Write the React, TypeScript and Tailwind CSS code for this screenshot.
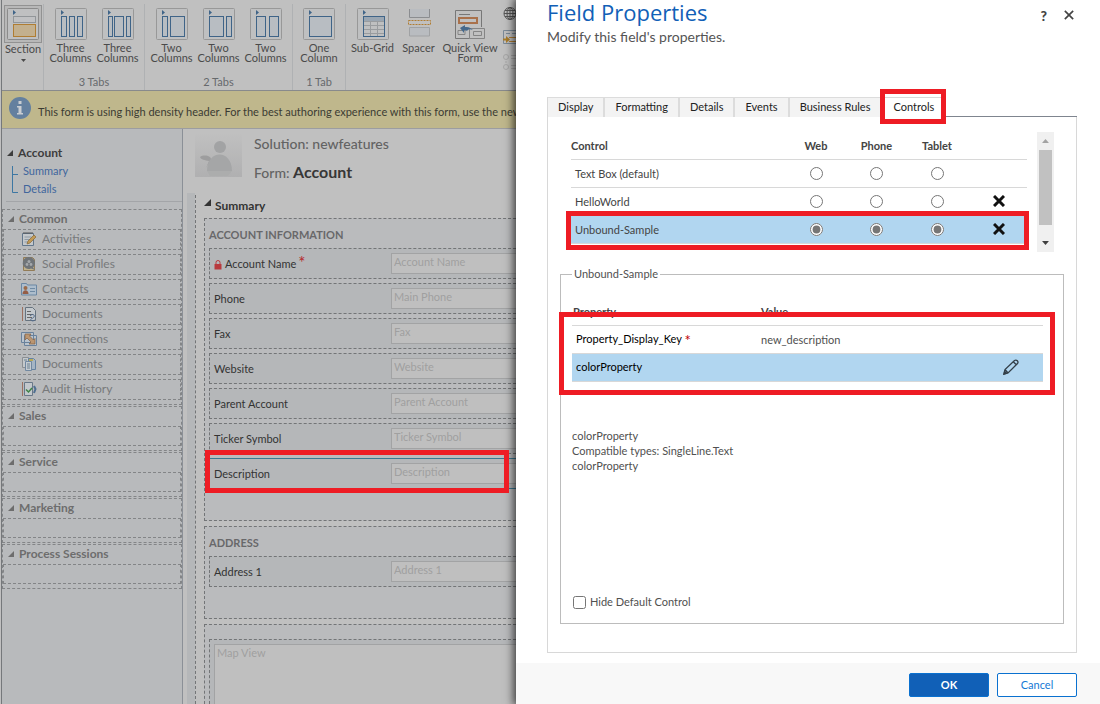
import type { ReactNode } from "react";

const COLUMN_BLUE = "#3f6488";

function Highlight({ className }: { className: string }) {
  return <div aria-hidden="true" className={`pointer-events-none absolute z-10 border-5 border-[#ee1c24] ${className}`} />;
}

function Caret({ className }: { className: string }) {
  return (
    <svg aria-hidden="true" viewBox="0 0 7 7" className={`shrink-0 fill-current ${className}`}>
      <path d="M7 0V7H0Z" />
    </svg>
  );
}

function ColumnsIcon({ columns }: { columns: number[][] }) {
  return (
    <svg viewBox="0 0 32 32" className="size-8" fill="none">
      <rect x="0.5" y="0.5" width="31" height="31" rx="1" fill="#bfc0c1" stroke="#989898" />
      <path d="M6 2l3 2.5L6 7z" fill={COLUMN_BLUE} />
      {columns.map(([x, w]) => (
        <rect key={x} x={x + 0.5} y="8.5" width={w - 1} height="20" fill="#b8bdc2" stroke={COLUMN_BLUE} />
      ))}
    </svg>
  );
}

function SectionIcon() {
  return (
    <svg viewBox="0 0 32 32" className="size-8" fill="none">
      <rect x="0.5" y="0.5" width="31" height="31" rx="1" fill="#bfc0c1" stroke="#8b8b8b" />
      <path d="M6 2l3 2.5L6 7z" fill={COLUMN_BLUE} />
      <rect x="6.5" y="8.5" width="22" height="6" fill="#c0c1c3" stroke="#929699" />
      <rect x="6.5" y="16.5" width="22" height="12" fill="#c3b08e" stroke="#b07d32" />
    </svg>
  );
}

function SubGridIcon() {
  return (
    <svg viewBox="0 0 32 32" className="size-8" fill="none">
      <rect x="0.5" y="0.5" width="31" height="31" rx="1" fill="#bfc0c1" stroke="#989898" />
      <path d="M6 2l3 2.5L6 7z" fill={COLUMN_BLUE} />
      <path d="M7 9h20v4H7z" fill="#9aa6b2" />
      <path d="M7 13.500h20M7 17.500h20M7 21.500h20M7 25.500h20M13.500 13v15M20.500 13v15" stroke="#999c9f" />
      <rect x="6.5" y="8.5" width="21" height="20" stroke={COLUMN_BLUE} />
    </svg>
  );
}

function SpacerIcon() {
  return (
    <svg viewBox="0 0 32 32" className="size-8" fill="none">
      <path d="M6.500 1v8.500h20V1" fill="#b9bcc0" stroke="#8b8d90" />
      <path d="M6.500 28V19.500h20V28z" fill="#b9bcc0" stroke="#a0a2a4" />
      <rect x="5.500" y="12.500" width="22" height="4" stroke="#b07d32" strokeDasharray="2 1" />
    </svg>
  );
}

function QuickViewIcon() {
  return (
    <svg viewBox="0 0 32 32" className="size-8" fill="none">
      <path d="M1.500 2.500h26V19M1.500 2.500v28h14" stroke="#777" />
      <path d="M5 6.500h11" stroke="#777" />
      <rect x="5" y="10" width="18" height="5" stroke="#a9714b" strokeWidth="2" />
      <path d="M4 22.500h7v4H4zM15.500 20.500h15v10h-15zM19.500 23.500h8v4h-8z" stroke="#858585" />
      <path d="M6 20l5-3v2c4-.5 6 1 8 3l-4-1c-1 2-3 2-5 1v3z" fill="#46698c" />
    </svg>
  );
}

function SideIcons() {
  return (
    <svg viewBox="0 0 16 64" className="h-16 w-4" fill="none">
      <g stroke="#555">
        <circle cx="7" cy="7.500" r="6" />
        <ellipse cx="7" cy="7.500" rx="3" ry="6" />
        <path d="M1 7.500h12M2 4.500h10M2 10.500h10M7 1.500v12" />
      </g>
      <path d="M0.500 24.500H16M0.500 24.500v13H16M3 27.500h4M9 27.500h6" stroke="#7b8a98" />
      <path d="M6 31.500h10v4H6" stroke="#b07d32" />
      <path d="M0 32.500h3V30l4 3.500L3 37v-2.500H0z" fill="#a97c2a" />
      <g stroke="#a6a6a6">
        <circle cx="3" cy="51" r="2.500" />
        <circle cx="3" cy="61" r="2.500" />
        <path d="M8 49.500h8M8 52.500h8M3 55v2M8 59.500h8M8 62.500h8" />
      </g>
    </svg>
  );
}

function RibbonItem({ icon, lines, width = "w-[47px]" }: { icon: ReactNode; lines: string[]; width?: string }) {
  return (
    <button className={`flex flex-col items-center pt-2 ${width}`}>
      {icon}
      <span className="mt-[3px] text-[11px] leading-[10px] whitespace-nowrap">
        {lines.map((line) => (
          <span key={line} className="block">{line}</span>
        ))}
      </span>
    </button>
  );
}

function RibbonGroup({ title, children }: { title?: string; children: ReactNode }) {
  return (
    <div className="mt-1 flex shrink-0 flex-col border-r border-[#afb1b3] px-[3px]">
      <div className="-mt-1 flex flex-1 items-start">{children}</div>
      <div className="h-4 text-center text-[11px] leading-4 text-[#66696c]">{title}</div>
    </div>
  );
}

function Ribbon() {
  const threeEqual = [[6, 6], [14, 6], [22, 6]];
  const threeWide = [[6, 5], [12, 10], [24, 5]];
  return (
    <div className="flex h-[91px] overflow-hidden border-b border-[#888a8c] text-[#4a4a4a]">
      <div className="mt-1 shrink-0 border-r border-[#afb1b3] pr-px pl-0.5">
        <button className="flex flex-col items-center">
          <span className="mt-px flex size-[38px] items-center justify-center border border-[#929292] bg-[#b8b8b8]"><SectionIcon /></span>
          <span className="text-[11px] leading-3">Section</span>
          <svg viewBox="0 0 5 3" className="mt-1 h-[3px] w-[5px]"><path d="M0 0h5L2.500 3z" fill="#4a4a4a" /></svg>
        </button>
      </div>
      <RibbonGroup title="3 Tabs">
        <RibbonItem icon={<ColumnsIcon columns={threeEqual} />} lines={["Three", "Columns"]} />
        <RibbonItem icon={<ColumnsIcon columns={threeWide} />} lines={["Three", "Columns"]} />
      </RibbonGroup>
      <RibbonGroup title="2 Tabs">
        <RibbonItem icon={<ColumnsIcon columns={[[6, 6], [14, 15]]} />} lines={["Two", "Columns"]} />
        <RibbonItem icon={<ColumnsIcon columns={[[6, 15], [23, 6]]} />} lines={["Two", "Columns"]} />
        <RibbonItem icon={<ColumnsIcon columns={[[6, 10], [19, 10]]} />} lines={["Two", "Columns"]} />
      </RibbonGroup>
      <RibbonGroup title="1 Tab">
        <RibbonItem width="w-[46px]" icon={<ColumnsIcon columns={[[6, 23]]} />} lines={["One", "Column"]} />
      </RibbonGroup>
      <div className="flex shrink-0 items-start pl-[3px]">
        <RibbonItem icon={<SubGridIcon />} lines={["Sub-Grid"]} />
        <RibbonItem width="w-[45px]" icon={<SpacerIcon />} lines={["Spacer"]} />
        <RibbonItem width="w-[58px]" icon={<QuickViewIcon />} lines={["Quick View", "Form"]} />
        <div className="mt-[6px] ml-[4px]"><SideIcons /></div>
      </div>
    </div>
  );
}

function Notice() {
  return (
    <div className="flex h-[38px] items-center gap-[7px] overflow-hidden border-b border-[#9c9da0] bg-[#bfb78c] pl-[7px] whitespace-nowrap">
      <svg viewBox="0 0 22 22" className="-mt-[3px] size-[22px] shrink-0">
        <circle cx="11" cy="11" r="11" fill="#64809f" />
        <path d="M9.500 4h3v3h-3zM8 9h4.500v7H14v1.500H8V16h1.500v-5.500H8z" fill="#c9cdd2" />
      </svg>
      <p className="pt-1 text-[11px] leading-4 text-[#3b3b33]">
        This form is using high density header. For the best authoring experience with this form, use the new form designer.
      </p>
    </div>
  );
}

const page = <path d="M4.500 1.500h7l3 3v10h-10z" fill="#c3c8cc" stroke="#66737f" />;

const navIcons: Record<string, ReactNode> = {
  activities: (
    <>
      <path d="M1.500 2.500h11v12h-11z" fill="#c4c8cb" stroke="#62778c" />
      <path d="M3 1v2M5 1v2M7 1v2M9 1v2M11 1v2" stroke="#555" />
      <path d="M3.500 6h7M3.500 8.500h7M3.500 11h4" stroke="#8f9aa4" />
      <path d="M6 13l1-3 6-6 2 2-6 6z" fill="#c29a55" stroke="#87683a" strokeWidth=".7" />
    </>
  ),
  social: (
    <>
      <path d="M2.500 1.500h9l2 2v11h-11z" fill="#c0b28d" stroke="#927c58" />
      <path d="M8 1a6 6 0 0 1 6 6c0 2-1 3.500-2 4.500l2 2.500-4-1.500A6 6 0 1 1 8 1z" fill="#6f7478" />
      <circle cx="8" cy="5.500" r="1.500" fill="#a4a8ab" />
      <circle cx="6" cy="8.500" r="1.400" fill="#a4a8ab" />
      <circle cx="10" cy="8.500" r="1.400" fill="#a4a8ab" />
    </>
  ),
  contacts: (
    <>
      <path d="M.5 2.500h5l1 1.500h9v10H.5z" fill="#adbdcc" stroke="#6b87a3" />
      <circle cx="4.500" cy="7" r="2" fill="#9a6a49" />
      <path d="M1.500 13c0-5 6-5 6 0z" fill="#955d46" />
      <path d="M9 7.500h5M9 10.500h5" stroke="#6f8aa3" />
    </>
  ),
  document: (
    <>
      <path d="M1.500 1v14" stroke="#9b7161" />
      {page}
      <path d="M6 5.500h4M6 8.500h6M6 11.500h5" stroke="#666" />
      <path d="M9 10c3-3 5-1 4 1s-4 1-3 3 4 0 4 0" fill="none" stroke="#536c8e" />
    </>
  ),
  connections: (
    <>
      <path d="M.5 1.500h12v10H.5zM3.500 4.500h12v10h-12z" fill="#b9c3cd" stroke="#6a829c" />
      <path d="M4 3h6L8.500 5l4 4L14 7.500V13H8l2-2-4-4-2 2z" fill="#bb9671" stroke="#825f43" strokeWidth=".7" />
    </>
  ),
  documents: (
    <>
      <path d="M1.500 1.500h6v10h-6z" fill="#c4c8cb" stroke="#8a8f93" />
      <path d="M7.500 2.500h5l2 2v9h-7z" fill="#a5b5c4" stroke="#6582a0" />
      <path d="M4.500 5.500h6v9h-6z" fill="#c4cbd1" stroke="#7188a0" />
      <path d="M6 8h3M6 10h3M6 12h3M3 4h3" stroke="#6b8090" />
      <path d="M8 3h4v2H8z" fill="#b7aa57" />
    </>
  ),
  audit: (
    <>
      <path d="M1.500 1v14" stroke="#9b7161" />
      <path d="M3.500 1.500h8v13h-8z" fill="#c3c8cc" stroke="#687888" />
      <path d="M13 5l1.500 3-1.500 4" fill="none" stroke="#4f6f91" strokeWidth="2" />
      <path d="M5 8.500l2.500 2.500 3.500-4" fill="none" stroke="#3f8347" strokeWidth="1.500" />
    </>
  ),
};

const commonItems = [
  { icon: "activities", label: "Activities" },
  { icon: "social", label: "Social Profiles" },
  { icon: "contacts", label: "Contacts" },
  { icon: "document", label: "Documents" },
  { icon: "connections", label: "Connections" },
  { icon: "documents", label: "Documents" },
  { icon: "audit", label: "Audit History" },
];

function NavSection({ title, children }: { title: string; children: ReactNode }) {
  return (
    <section className="mb-px border border-dashed border-[#838587] text-[#6d6d6d]">
      <h3 className="flex h-[19px] items-center gap-[5px] pb-0.5 pl-[5px] text-[12px] leading-4 font-bold">
        <Caret className="size-[6px]" />
        {title}
      </h3>
      {children}
    </section>
  );
}

function Sidebar() {
  return (
    <nav className="w-[181px] shrink-0 border-r border-[#8b9097] bg-[#b8babc]">
      <div className="ml-1 border-b border-[#a3a5a8] pt-[15px] pb-[3px]">
        <h3 className="flex h-[18px] items-center gap-[5px] pl-px text-[12px] font-bold text-[#3d3d3d]">
          <Caret className="size-[6px]" />
          Account
        </h3>
        <div className="flex">
          <svg viewBox="0 0 8 36" className="ml-[5px] h-9 w-2 shrink-0" fill="none" stroke="#3d77a3">
            <path d="M1.500 4v26.500H7M2 12.500h5" />
          </svg>
          <ul className="pl-1 text-[11px] leading-[18px] text-[#41669c]">
            <li><a href="#summary">Summary</a></li>
            <li><a href="#details">Details</a></li>
          </ul>
        </div>
      </div>
      <div className="mt-[7px]">
        <NavSection title="Common">
          <ul>
            {commonItems.map((item, i) => (
              <li key={i} className="mb-1 flex h-[21px] items-center gap-[5px] border border-dashed border-[#838587] pb-0.5 pl-[17px] text-[12px] leading-4 text-[#77797b]">
                <svg viewBox="0 0 16 16" className="size-4" aria-hidden="true">{navIcons[item.icon]}</svg>
                <a href="#common">{item.label}</a>
              </li>
            ))}
          </ul>
        </NavSection>
        {["Sales", "Service", "Marketing", "Process Sessions"].map((title) => (
          <NavSection key={title} title={title}>
            <div className="mb-1 h-5 border border-dashed border-[#838587]" />
          </NavSection>
        ))}
      </div>
    </nav>
  );
}

function FormSection({ title, children }: { title: string; children: ReactNode }) {
  return (
    <section className="mb-[5px] border-y border-l border-dashed border-[#737577] bg-[#babbbd] pb-[27px] pl-1">
      <h4 className="flex h-[29px] items-center pt-1 text-[11px] font-bold text-[#68686a]">{title}</h4>
      {children}
    </section>
  );
}

function FormRow({ label, placeholder, required, selected }: { label: string; placeholder: string; required?: boolean; selected?: boolean }) {
  const id = label.toLowerCase().replace(/ /g, "-");
  return (
    <div className={`relative mb-1 flex h-[31px] border-y border-l bg-[#b5b7b9] pl-1 ${selected ? "border-[#3a7892]" : "border-dashed border-[#737577]"}`}>
      <label htmlFor={id} className="flex w-[177px] shrink-0 items-center pt-0.5 text-[11px] text-[#333]">
        {required && (
          <svg viewBox="0 0 8 10" className="mr-[3px] h-[10px] w-2">
            <path d="M2 4V2.500a2 2 0 0 1 4 0V4" fill="none" stroke="#b93a3e" />
            <path d="M.5 4h7v5.500h-7z" fill="#b93a3e" />
          </svg>
        )}
        {label}
        {required && <span className="ml-0.5 self-start text-[17px] leading-6 text-[#b52a2e]">*</span>}
      </label>
      <input
        id={id}
        placeholder={placeholder}
        className="mt-1 h-[21px] min-w-0 flex-1 border-y border-l border-[#a2a3a4] bg-[#bfbfbf] px-0.5 pb-1 text-[11px] placeholder:text-[#a0a0a0]"
      />
      {selected && <Highlight className="-top-[9px] right-[7px] -bottom-[5px] -left-[5px]" />}
    </div>
  );
}

function FormCanvas() {
  return (
    <main className="flex min-w-0 flex-1 flex-col">
      <header className="flex h-16 shrink-0 pl-3 whitespace-nowrap">
        <svg viewBox="0 0 47 44" className="mt-1 h-11 w-[47px] shrink-0">
          <defs>
            <linearGradient id="photo" x1="0" y1="0" x2="0" y2="1">
              <stop offset="0" stopColor="#c0c0c0" />
              <stop offset="1" stopColor="#b0b0b1" />
            </linearGradient>
          </defs>
          <path d="M0 0h47v44H0z" fill="url(#photo)" />
          <path d="M5 24c4-3 12-1 11 3-1 3-3 4-5 8l3-7c-4-1-8-1-9-4z" fill="#9d9d9e" />
          <circle cx="25" cy="14" r="6" fill="#a2a3a4" />
          <path d="M12 38c0-22 25-22 25 0z" fill="#a5a6a7" />
          <path d="M12 38h25l-4 5H15z" fill="#acadad" />
        </svg>
        <div className="ml-3 text-[14px]">
          <p className="pt-[5px] leading-5 font-medium text-[#636363]">Solution: newfeatures</p>
          <h2 className="mt-2 leading-5 font-medium text-[#636363]">
            Form: <span className="text-[16px] font-bold text-[#373737]">Account</span>
          </h2>
        </div>
      </header>
      <div className="ml-1 flex flex-1">
        <div className="w-2 shrink-0 bg-[#b5b7b9]" />
        <div className="mt-0.5 flex min-w-0 flex-1 flex-col border-l border-dashed border-[#737577] pl-2">
          <h3 className="flex h-[23px] shrink-0 items-center gap-1 pb-0.5 text-[12px] font-bold text-[#333]">
            <Caret className="mb-[7px] size-[7px]" />
            Summary
          </h3>
          <FormSection title="ACCOUNT INFORMATION">
            <FormRow label="Account Name" placeholder="Account Name" required />
            <FormRow label="Phone" placeholder="Main Phone" />
            <FormRow label="Fax" placeholder="Fax" />
            <FormRow label="Website" placeholder="Website" />
            <FormRow label="Parent Account" placeholder="Parent Account" />
            <FormRow label="Ticker Symbol" placeholder="Ticker Symbol" />
            <FormRow label="Description" placeholder="Description" selected />
          </FormSection>
          <FormSection title="ADDRESS">
            <FormRow label="Address 1" placeholder="Address 1" />
          </FormSection>
          <section className="flex flex-1 border-t border-l border-dashed border-[#737577] bg-[#babbbd] pt-[14px] pl-1">
            <div className="flex flex-1 border-t border-l border-dashed border-[#737577] bg-[#b5b7b9] pt-1 pl-1">
              <div className="flex-1 border-t border-l border-[#a2a3a4] bg-[#bfbfbf] px-0.5 text-[11px] leading-4 text-[#a0a0a0]">Map View</div>
            </div>
          </section>
        </div>
      </div>
    </main>
  );
}

function CrossMark({ className }: { className: string }) {
  return (
    <svg viewBox="0 0 12 12" className={className} fill="none" stroke="currentColor" aria-hidden="true">
      <path d="M1 1l10 10M11 1L1 11" />
    </svg>
  );
}

const controls = [
  { name: "Text Box (default)", checked: false, removable: false },
  { name: "HelloWorld", checked: false, removable: true },
  { name: "Unbound-Sample", checked: true, removable: true },
];

function ControlsTable() {
  return (
    <div className="flex gap-[10px] pr-[22px] pl-[23px]">
      <div className="relative h-[120px] flex-1 overflow-visible">
        <table className="w-full table-fixed text-[11px] text-[#444]">
          <thead>
            <tr className="h-[27px] border-b border-[#d8d8d8]">
              <th className="pt-0.5 text-left font-bold">Control</th>
              <th className="w-[60px] pt-0.5 font-bold">Web</th>
              <th className="w-[61px] pt-0.5 font-bold">Phone</th>
              <th className="w-[60px] pt-0.5 font-bold">Tablet</th>
              <th className="w-[60px]" />
            </tr>
          </thead>
          <tbody>
            {controls.map((row) => (
              <tr key={row.name} className={`h-7 border-b border-[#d8d8d8] ${row.checked ? "bg-[#b1d6f0]" : ""}`}>
                <td className="pt-0.5 pl-1">{row.name}</td>
                {["Web", "Phone", "Tablet"].map((device) => (
                  <td key={device} className="text-center">
                    <input type="radio" name={device} aria-label={`${row.name} on ${device}`} defaultChecked={row.checked} className="mx-auto block size-[13px] accent-[#767676]" />
                  </td>
                ))}
                <td className="pl-1">
                  {row.removable && (
                    <button aria-label={`Remove ${row.name}`} className="mx-auto block">
                      <CrossMark className="size-3 stroke-3 text-[#111]" />
                    </button>
                  )}
                </td>
              </tr>
            ))}
          </tbody>
        </table>
        <Highlight className="-right-0.5 bottom-0.5 -left-[5px] h-[39px]" />
      </div>
      <div className="flex h-[120px] w-[17px] flex-col items-center justify-between bg-[#f0f0f0]">
        <svg viewBox="0 0 7 4" className="my-[7px] h-1 w-[7px]"><path d="M0 4L3.500 0 7 4z" fill="#a3a3a3" /></svg>
        <div className="h-19 w-[13px] bg-[#c1c1c1]" />
        <svg viewBox="0 0 7 4" className="mt-4 mb-[7px] h-1 w-[7px]"><path d="M0 0h7L3.500 4z" fill="#404040" /></svg>
      </div>
    </div>
  );
}

function PropertiesBox() {
  return (
    <fieldset className="mx-3 flex h-[357px] flex-col border border-[#bcbcbc] px-[11px] text-[11px] text-[#505050]">
      <legend className="px-0.5 leading-[14px]">Unbound-Sample</legend>
      <div className="relative mt-[17px] mr-[9px] h-[83px]">
        <table className="w-full table-fixed">
          <thead>
            <tr className="h-[27px] border-b border-[#d8d8d8]">
              <th className="w-[189px] pt-0.5 pl-px text-left font-bold text-[#444]">Property</th>
              <th className="pt-0.5 text-left font-bold text-[#444]">Value</th>
              <th className="w-16" />
            </tr>
          </thead>
          <tbody>
            <tr className="h-7 border-b border-[#d8d8d8]">
              <td className="pl-1 text-black">
                Property_Display_Key <span className="align-bottom text-[15px] leading-4 text-[#c00000]">*</span>
              </td>
              <td className="pt-0.5">new_description</td>
              <td />
            </tr>
            <tr className="h-7 border-b border-[#d8d8d8] bg-[#b1d6f0]">
              <td className="pl-1 text-black">colorProperty</td>
              <td />
              <td>
                <button aria-label="Edit colorProperty" className="mx-auto block">
                  <svg viewBox="0 0 16 16" className="size-4" fill="none" stroke="#333f48" strokeWidth="1.300">
                    <path d="M1 15l1-4.500L11.500 1.500q1.500-1 2.800.3t.2 2.700L5 14zM10.300 2.700l3 3M2 10.500L5 14" />
                    <path d="M1 15l.6-2.500L3.500 14.300z" fill="#333f48" />
                  </svg>
                </button>
              </td>
            </tr>
          </tbody>
        </table>
        <Highlight className="top-[14px] -right-3 -bottom-[14px] -left-[13px]" />
      </div>
      <div className="mt-[47px] leading-[15px]">
        <p>colorProperty</p>
        <p>Compatible types: SingleLine.Text</p>
        <p>colorProperty</p>
      </div>
      <label className="mt-auto mb-[13px] flex items-center gap-1 pl-px leading-4">
        <input type="checkbox" className="size-[13px]" />
        Hide Default Control
      </label>
    </fieldset>
  );
}

function FieldDialog() {
  return (
    <div role="dialog" aria-label="Field Properties" className="relative flex w-[584px] shrink-0 flex-col bg-white shadow-[0_0_9px_2px_rgba(0,0,0,0.75)]">
      <header className="flex h-[97px] shrink-0 justify-between pr-[26px] pl-[31px]">
        <div>
          <h1 className="font-['Open_Sans','Noto_Sans',sans-serif] text-[22px] leading-6 text-[#1160b7]">Field Properties</h1>
          <p className="mt-1 text-[14px] leading-[18px] text-[#555]">Modify this field's properties.</p>
        </div>
        <div className="flex h-[30px] items-center gap-[17px] text-[#444]">
          <button aria-label="Help" className="text-[14px] font-black">?</button>
          <button aria-label="Close"><CrossMark className="size-[10px] stroke-2" /></button>
        </div>
      </header>
      <div className="mr-[23px] ml-[31px] flex h-5 shrink-0 border-l border-[#d8d8d8] text-[11px] text-[#222]">
        {["Display", "Formatting", "Details", "Events", "Business Rules"].map((tab) => (
          <button key={tab} className="border-t border-r-2 border-[#dcdcdc] bg-[#f3f3f3] px-[10px]">{tab}</button>
        ))}
        <button className="relative border-t border-[#d8d8d8] px-[11px]">
          Controls
          <Highlight className="-top-[9px] -right-px -bottom-[7px] -left-0.5" />
        </button>
        <div className="flex-1 border-b border-[#7f858f]" />
      </div>
      <div className="mr-[23px] mb-[10px] ml-[31px] flex-1 border-x border-b border-[#d8d8d8] pt-[15px]">
        <ControlsTable />
        <div className="h-[15px]" />
        <PropertiesBox />
      </div>
      <footer className="flex h-[41px] shrink-0 items-center justify-end gap-2 bg-[#f8f8f8] pr-[23px] text-[11px]">
        <button className="mt-[3px] h-6 w-20 rounded-xs border border-[#0a71d0] bg-[#1160b7] font-bold text-white">OK</button>
        <button className="mt-[3px] h-6 w-20 rounded-xs border border-[#0a71d0] bg-white text-[#1478d4]">Cancel</button>
      </footer>
    </div>
  );
}

export default function App() {
  return (
    <div className="flex h-screen min-h-[704px] overflow-hidden bg-[#c0c0c0] font-['Lato','Noto_Sans',sans-serif]">
      <div className="ml-px flex min-w-0 flex-1 flex-col overflow-hidden border-l border-[#75787b]">
        <Ribbon />
        <Notice />
        <div className="flex flex-1">
          <Sidebar />
          <FormCanvas />
        </div>
      </div>
      <FieldDialog />
    </div>
  );
}
